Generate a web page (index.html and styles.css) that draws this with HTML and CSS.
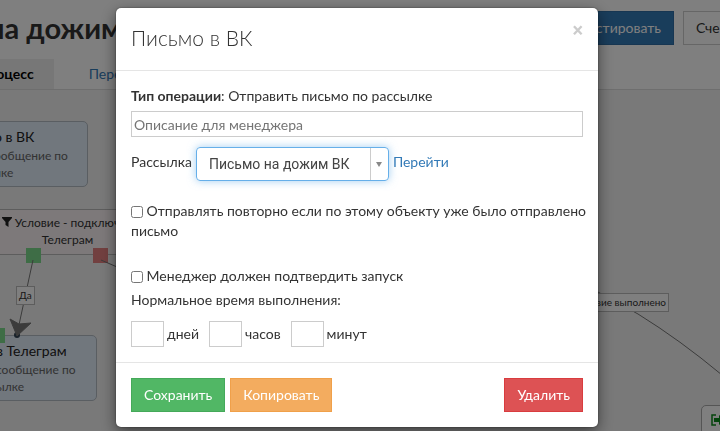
FILE: index.html
```html
<!DOCTYPE html>
<html lang="ru">
  <head>
    <meta charset="UTF-8" />
    <meta name="viewport" content="width=device-width, initial-scale=1.0" />
    <title>Письмо в ВК</title>
    <link rel="stylesheet" href="styles.css">
  </head>
  <body>
    <div class="page">
      <header class="page-header">
        <h1>на дожим</h1>
        <div class="page-actions">
          <button class="btn btn-primary" type="button">Тестировать</button>
          <button class="btn btn-default" type="button">Сче</button>
        </div>
      </header>
      <nav class="tabs">
        <a class="tab active" href="#">Процесс</a>
        <a class="tab" href="#">Пере</a>
      </nav>
      <main class="canvas">
        <div class="node node-vk">
          <div class="node-title">о в ВК</div>
          <div>ообщение по</div>
          <div>лке</div>
        </div>
        <div class="condition">
          <svg width="10" height="10" viewBox="0 0 10 10"><path d="M0 0h10v1L6.500 5v5L3.500 8V5L0 1z" fill="#222" /></svg>
          Условие - подключен<br>Телеграм
        </div>
        <div class="node node-telegram">
          <div class="node-title">в Телеграм</div>
          <div>сообщение по</div>
          <div>ылке</div>
        </div>
        <div class="port port-yes"></div>
        <div class="port port-no"></div>
        <div class="port port-in"></div>
        <svg class="links" width="720" height="342" viewBox="0 0 720 342">
          <path d="M33 170L17 244" />
          <path d="M101 170L124 180C260 235 480 130 598 202L638 224Q680 250 722 285" />
          <circle cx="17" cy="245" r="3" />
          <path class="arrow" d="M10 229L19 234L31 233L17 246z" />
        </svg>
        <div class="link-label label-yes">Да</div>
        <div class="link-label label-done">Условие выполнено</div>
        <div class="node-exit">
          <svg width="16" height="12" viewBox="0 0 16 12">
            <path d="M5 1H1v10h4" fill="none" stroke="#0a8a1a" stroke-width="1.500" />
            <path d="M3 4h5V1l6 5l-6 5V8H3z" fill="#0a8a1a" />
          </svg>
        </div>
      </main>
    </div>

    <div class="backdrop">
      <form class="modal" role="dialog" aria-labelledby="modal-title">
        <div class="modal-header">
          <h2 id="modal-title">Письмо в ВК</h2>
          <button class="close" type="button" aria-label="Закрыть">×</button>
        </div>
        <div class="modal-body">
          <div><b>Тип операции</b>: Отправить письмо по рассылке</div>
          <input class="description" type="text" placeholder="Описание для менеджера" aria-label="Описание для менеджера">
          <div class="mailing">
            <label for="mailing">Рассылка</label>
            <div class="select">
              <select id="mailing">
                <option>Письмо на дожим ВК</option>
              </select>
            </div>
            <a href="#">Перейти</a>
          </div>
          <label class="check check-repeat">
            <input type="checkbox">
            Отправлять повторно если по этому объекту уже было отправлено письмо
          </label>
          <label class="check">
            <input type="checkbox">
            Менеджер должен подтвердить запуск
          </label>
          <div class="time-title">Нормальное время выполнения:</div>
          <div class="time">
            <label><input type="text"> дней</label>
            <label><input type="text"> часов</label>
            <label><input type="text"> минут</label>
          </div>
        </div>
        <div class="modal-footer">
          <button class="btn btn-success" type="submit">Сохранить</button>
          <button class="btn btn-warning" type="button">Копировать</button>
          <button class="btn btn-danger" type="button">Удалить</button>
        </div>
      </form>
    </div>
  </body>
</html>
```
FILE: styles.css
```css
* {
  box-sizing: border-box;
}
body {
  margin: 0;
  height: 100vh;
  overflow: hidden;
  font: 14px/20px Lato, "Noto Sans", sans-serif;
  color: #333;
}
h1,
h2 {
  margin: 0;
}
a {
  color: #337ab7;
  text-decoration: none;
}
input,
select,
button {
  font: inherit;
  color: inherit;
}
.btn {
  height: 34px;
  padding: 0 12px;
  border: 1px solid;
  color: #fff;
}
.btn-primary {
  background: #337ab7;
  border-color: #2e6da4;
}
.btn-default {
  width: 70px;
  background: #fff;
  border-color: #ccc;
  color: #333;
  text-align: left;
}
.btn-success {
  background: #51b765;
  border-color: #45a95a;
}
.btn-warning {
  background: #f3ac5f;
  border-color: #f0a04a;
}
.btn-danger {
  background: #dd5254;
  border-color: #d93c3f;
}

/* process page */
.page {
  display: flex;
  flex-direction: column;
  height: 100%;
  overflow: hidden;
}
.page-header {
  display: flex;
  justify-content: space-between;
  align-items: center;
  height: 59px;
  margin: 0 -33px 0 -12px;
  padding-bottom: 3px;
}
h1 {
  font-size: 29px;
  line-height: 34px;
}
.page-actions {
  display: flex;
  gap: 9px;
}
.tabs {
  display: flex;
  flex: none;
  height: 31px;
  margin-left: -42px;
  border-bottom: 1px solid #ddd;
}
.tab {
  padding: 5px 20px;
  margin-right: 15px;
}
.tab.active {
  background: #efefef;
  color: #000;
  font-weight: bold;
}
.canvas {
  position: relative;
  flex: 1;
  background: #f3f3f3;
  overflow: hidden;
}
.node {
  position: absolute;
  height: 66px;
  padding: 5px 11px;
  border: 1px solid #b4bcc4;
  border-radius: 5px;
  background: #e2eefa;
  color: #666;
  font-size: 12px;
  line-height: 17px;
}
.node-title {
  color: #222;
  font-size: 14px;
  line-height: 20px;
}
.node-vk {
  top: 31px;
  left: -18px;
  width: 106px;
}
.node-telegram {
  top: 245px;
  left: -16px;
  width: 113px;
}
.condition {
  position: absolute;
  left: -40px;
  top: 119px;
  width: 215px;
  height: 46px;
  padding: 4px;
  border: 1px solid #bbb;
  background: #faf3f5;
  font-size: 12px;
  line-height: 17px;
  text-align: center;
}
.port {
  position: absolute;
  top: 158px;
  width: 15px;
  height: 15px;
  background: #7ddb8d;
}
.port-yes {
  left: 26px;
}
.port-no {
  left: 93px;
  background: #e58080;
}
.port-in {
  left: -10px;
  top: 238px;
}
.links {
  position: absolute;
  left: 0;
  top: 0;
  fill: none;
  stroke: #777;
}
.links circle {
  fill: #345;
  stroke: none;
}
.links .arrow {
  fill: #777;
}
.link-label {
  position: absolute;
  height: 19px;
  padding: 0 2px;
  border: 1px solid #bbb;
  background: #fff;
  font-size: 10px;
  line-height: 17px;
}
.label-yes {
  left: 16px;
  top: 196px;
}
.label-done {
  right: 51px;
  top: 203px;
}
.node-exit {
  position: absolute;
  left: 701px;
  top: 315px;
  width: 80px;
  height: 60px;
  padding: 8px 9px;
  border: 1px solid #aaa;
  border-radius: 5px;
  background: #fff;
}
.node-exit svg {
  display: block;
}

/* modal */
.backdrop {
  position: fixed;
  inset: 0;
  padding: 8px 6px 0 0;
  background: rgba(0, 0, 0, 0.5);
}
.modal {
  max-width: 482px;
  margin: 0 auto;
  border-radius: 5px;
  background: #fff;
  box-shadow: 0 5px 15px rgba(0, 0, 0, 0.5), 0 0 2px rgba(0, 0, 0, 0.5);
}
.modal-header {
  display: flex;
  justify-content: space-between;
  align-items: flex-start;
  padding: 15px 15px 17px;
  border-bottom: 1px solid #e5e5e5;
}
h2 {
  font-size: 21px;
  line-height: 30px;
  font-weight: 300;
}
.close {
  padding: 0;
  border: 0;
  background: none;
  color: #ccc;
  font: bold 20px/14px Roboto, sans-serif;
}
.modal-body {
  padding: 15px;
}
.description {
  display: block;
  width: 100%;
  height: 26px;
  margin: 5px 0 10px;
  padding: 0 2px;
  border: 1px solid #ccc;
}
.description::placeholder {
  color: #757575;
}
.mailing {
  display: flex;
  align-items: center;
  gap: 4px;
  margin-bottom: 20px;
}
.mailing label,
.mailing a {
  padding-bottom: 4px;
}
.select {
  position: relative;
  width: 193px;
  height: 34px;
  border: 1px solid #66afe9;
  border-radius: 4px;
  box-shadow: 0 0 8px rgba(102, 175, 233, 0.6);
}
.select select {
  appearance: none;
  width: 100%;
  height: 100%;
  padding: 0 12px;
  border: 0;
  background: none;
  outline: none;
  color: #444;
  font: 14px Roboto, Arial, sans-serif;
}
.select::after {
  content: "";
  position: absolute;
  right: 6px;
  top: 14px;
  border: 3px solid transparent;
  border-top: 5px solid #888;
}
.select::before {
  content: "";
  position: absolute;
  right: 17px;
  top: 0;
  bottom: 0;
  border-left: 1px solid #ccc;
}
.check {
  display: block;
  margin-right: -10px;
}
.check input {
  width: 12px;
  height: 12px;
  margin: 0;
  vertical-align: -2px;
}
.check-repeat {
  margin-bottom: 25px;
}
.time-title {
  margin: 4px 0 11px;
}
.time {
  display: flex;
  gap: 10px;
}
.time label {
  display: flex;
  align-items: center;
  gap: 3px;
}
.time input {
  width: 33px;
  height: 26px;
  border: 1px solid #ccc;
}
.modal-footer {
  display: flex;
  gap: 5px;
  padding: 15px;
  border-top: 1px solid #e5e5e5;
}
.btn-danger {
  margin-left: auto;
}
```
